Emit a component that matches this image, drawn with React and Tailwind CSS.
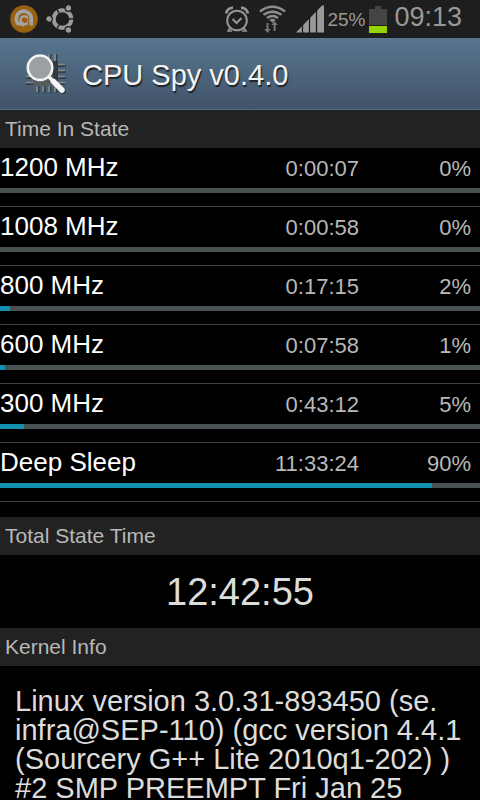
import React from 'react'

const states = [
    { name: '1200 MHz', time: '0:00:07', percent: 0 },
    { name: '1008 MHz', time: '0:00:58', percent: 0 },
    { name: '800 MHz', time: '0:17:15', percent: 2 },
    { name: '600 MHz', time: '0:07:58', percent: 1 },
    { name: '300 MHz', time: '0:43:12', percent: 5 },
    { name: 'Deep Sleep', time: '11:33:24', percent: 90 },
]

const AvastIcon = () => (
    <svg width="28" height="28" viewBox="0 0 28 28" aria-hidden="true">
        <circle cx="14" cy="14" r="13.8" fill="#99600f" />
        <path d="M9 19.5A7.500 7.500 0 1 1 21.300 14v6.500" fill="none" stroke="#a3a3a3" strokeWidth="3.600" />
        <path d="M8 18.500c1 2 3 3 6 3l1-3-4-3z" fill="#a3a3a3" />
        <circle cx="14.500" cy="15.300" r="4" fill="none" stroke="#a3a3a3" strokeWidth="2.400" />
        <path d="M18.300 11.500v11" stroke="#99600f" strokeWidth="1" />
    </svg>
)

const UbuntuIcon = () => (
    <svg width="28" height="28" viewBox="0 0 28 28" aria-hidden="true">
        <circle cx="16.500" cy="14" r="8.800" fill="none" stroke="#9a9a9a" strokeWidth="4" />
        <g stroke="#1e1e1e" strokeWidth="1.400">
            <path d="M16.500 14h12" />
            <path d="M16.500 14l-6-10.400" />
            <path d="M16.500 14l-6 10.400" />
        </g>
        <g fill="#9a9a9a" stroke="#1e1e1e" strokeWidth="1.300">
            <circle cx="3" cy="14" r="3.300" />
            <circle cx="22.400" cy="3" r="3.300" />
            <circle cx="22.400" cy="25" r="3.300" />
        </g>
    </svg>
)

const AlarmIcon = () => (
    <svg width="24" height="26" viewBox="0 0 24 26" fill="none" stroke="#949494" aria-hidden="true">
        <circle cx="12" cy="14.500" r="9.800" strokeWidth="2" />
        <path d="M7.500 13l4 4 5-5" strokeWidth="2" />
        <path d="M1.300 7.500C1.500 4 4.500 1.500 8 2M22.700 7.500C22.500 4 19.500 1.500 16 2" strokeWidth="2.800" />
        <path d="M5 22l-2 3h4M19 22l2 3h-4" strokeWidth="1.600" />
    </svg>
)

const WifiIcon = () => (
    <svg width="27" height="28" viewBox="0 0 27 28" aria-hidden="true">
        <g fill="none" stroke="#8c8c8c" strokeWidth="2.600">
            <path d="M1 6.500q12.500-9.500 25 0" />
            <path d="M4.500 9.800q9-6.500 18 0" />
            <path d="M8 13q5.500-4 11 0" />
        </g>
        <path d="M10.300 14.800q3.200-2 6.400 0l-3.200 3z" fill="#8c8c8c" />
        <path d="M7.500 18h2v6h2.200l-3.200 4-3.200-4h2.200z" fill="#777" />
        <path d="M14.600 26h2v-6h2.200l-3.200-4-3.200 4h2.200z" fill="#777" />
    </svg>
)

const SignalIcon = () => (
    <svg width="28" height="28" viewBox="0 0 28 28" aria-hidden="true">
        <path d="M0 27.500L26 .500h2v27z" fill="#999" />
        <path d="M6.500 20v8M13.500 12v16M20.500 5v23" stroke="#151515" strokeWidth="1.200" />
    </svg>
)

const BatteryIcon = () => (
    <svg width="18" height="28" viewBox="0 0 18 28" aria-hidden="true">
        <path d="M0 4h6V1h6v3h6v16H0z" fill="#454545" />
        <path d="M0 21h18v7H0z" fill="#94d200" />
    </svg>
)

const CpuSpyIcon = () => (
    <svg width="44" height="44" viewBox="0 0 44 44" aria-hidden="true">
        {/* chip pins, shadow first */}
        <path d="M14.500 32v9M20.500 32v9M26.500 32v9M32.500 32v9M26.500 2v8M32.500 2v8M32 14h10M32 20h10M32 26h10M32 32h9M2 26h8M2 32h8" stroke="#363e45" strokeWidth="2" />
        <path d="M13 33v7M19 33v7M25 33v7M31 33v7M25 2v8M31 2v8M32 12.500h9M32 18.500h9M32 24.500h9M32 30.500h9M2 24.500h8M2 30.500h8" stroke="#848c91" strokeWidth="1.600" />
        <rect x="9" y="9" width="25" height="25" rx="1" fill="#565b5d" />
        <path d="M29 9h5v20h-5z" fill="#33383b" />
        <path d="M29.500 29.500l10 10" stroke="#333b42" strokeWidth="5" strokeLinecap="round" />
        <circle cx="16" cy="15.700" r="12.200" fill="#9ba1a3" stroke="#f2f2f2" strokeWidth="2.600" />
        <path d="M25 25l5 5" stroke="#f5f5f5" strokeWidth="3.500" />
        <path d="M29.500 29.500l8.500 8.500" stroke="#f5f5f5" strokeWidth="5.500" strokeLinecap="round" />
    </svg>
)

const StatusBar = () => (
    <div className="flex h-[38px] shrink-0 items-center justify-between bg-[#1e1e1e] pr-[18px] pl-[10px] text-[#999]">
        <div className="flex items-center gap-2">
            <AvastIcon />
            <UbuntuIcon />
        </div>
        <div className="flex items-center">
            <div className="mr-[3px] flex items-center gap-[10px]">
                <AlarmIcon />
                <WifiIcon />
                <SignalIcon />
            </div>
            <span className="mr-1 pt-[2px] text-[19px]">25%</span>
            <BatteryIcon />
            <span className="ml-[7px] pb-1 text-[27px] leading-[34px]">09:13</span>
        </div>
    </div>
)

const SectionTitle = ({ children }) => (
    <h2 className="bg-[#222] px-[5px] text-[21px] leading-[38px] text-[#b8b8b8]">{children}</h2>
)

const StateRow = ({ state }) => (
    <li className="border-b border-[#404040] pb-[13px]">
        <div className="flex items-baseline pr-[9px] leading-[38px]">
            <span className="flex-1 text-[26px] text-white">{state.name}</span>
            <span className="text-[22px] text-[#b8b8b8]">{state.time}</span>
            <span className="w-28 text-right text-[22px] text-[#b8b8b8]">{state.percent}%</span>
        </div>
        <progress
            className="block h-[5px] w-full appearance-none [&::-webkit-progress-bar]:bg-[#4a5153] [&::-webkit-progress-value]:bg-[#1190b0]"
            value={state.percent}
            max="100"
            aria-label={state.name}
        />
    </li>
)

const App = () => {
    return (
        <div className="flex h-screen flex-col overflow-hidden bg-black font-['Liberation_Sans',Arial,sans-serif]">
            <StatusBar />

            <header className="flex h-[72px] shrink-0 items-center gap-[14px] border-b border-[#506c86] bg-linear-to-b from-[#587690] to-[#415468] pl-6">
                <CpuSpyIcon />
                <h1 className="pt-1 text-[29px] text-[#f5f5f5] [text-shadow:1px_2px_1px_#1c2227]">CPU Spy v0.4.0</h1>
            </header>

            <main className="min-h-0 flex-1 overflow-hidden">
                <SectionTitle>Time In State</SectionTitle>
                <ul className="mb-[15px]">
                    {states.map((state) => (
                        <StateRow key={state.name} state={state} />
                    ))}
                </ul>

                <SectionTitle>Total State Time</SectionTitle>
                <p className="pt-[2px] text-center text-[38px] leading-[71px] text-[#dcdcdc]">12:42:55</p>

                <SectionTitle>Kernel Info</SectionTitle>
                <p className="px-[15px] pt-[21px] text-[29px] leading-[29px] text-[#dcdcdc]">
                    Linux version 3.0.31-893450 (se.<wbr />infra@SEP-110) (gcc version 4.4.1 (Sourcery G++ Lite 2010q1-202) ) #2 SMP PREEMPT Fri Jan 25
                </p>
            </main>
        </div>
    )
}

export default App
